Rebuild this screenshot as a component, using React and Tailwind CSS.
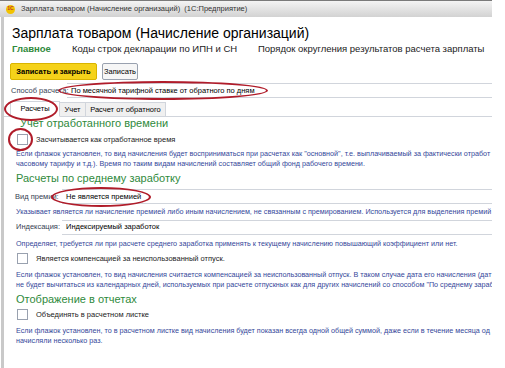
import React from 'react';

const font = { fontFamily: '"Liberation Sans", Arial, sans-serif' };

function Checkbox() {
    return <span className="inline-block h-[11px] w-[11px] border border-gray-400 bg-white" />;
}

function Note({ children }) {
    return (
        <div className="pl-[12px] text-[7.2px] leading-[9.5px] text-[#34489a] whitespace-nowrap">
            {children}
        </div>
    );
}

function Field({ label, value, labelWidth, labelPad = 'pl-[10px]' }) {
    return (
        <div className={`flex items-center h-[15px] ${labelPad}`}>
            <span className={`text-[7.5px] text-gray-700 whitespace-nowrap shrink-0 ${labelWidth}`}>{label}</span>
            <div className="flex-1 h-[15px] flex items-center border-t border-b border-gray-300 pl-[4px] text-[7.5px] text-black whitespace-nowrap">
                {value}
            </div>
        </div>
    );
}

function Ring({ className }) {
    return <span className={`absolute rounded-[50%] border-2 border-[#b01c2a] pointer-events-none ${className}`} />;
}

export default function App() {
    return (
        <div className="w-[505px] h-[368px] bg-white overflow-hidden relative" style={font}>
            <div className="w-[492px] h-[368px] overflow-hidden relative">
                {/* Title bar */}
                <div className="h-[17px] flex items-center gap-[6px] pl-[6px] border-t border-[#7a7a7a] bg-gradient-to-b from-[#f4f4f4] to-[#d2d2d2]">
                    <span className="h-[9px] w-[9px] rounded-full bg-[#f2c200] text-[5px] font-bold text-[#c0392b] flex items-center justify-center">1C</span>
                    <span className="text-[7.5px] text-[#333] whitespace-nowrap">Зарплата товаром (Начисление организаций)&nbsp; (1С:Предприятие)</span>
                </div>

                <div className="border-l-[3px] border-[#c9c9c9] h-[351px] ml-[1px]">
                    {/* Heading */}
                    <div className="h-[23px] flex items-end pl-[8px] text-[14px] text-black leading-none whitespace-nowrap">
                        Зарплата товаром (Начисление организаций)
                    </div>
                    {/* Section links */}
                    <div className="h-[18px] flex items-center pl-[8px] text-[9.5px] text-[#222] whitespace-nowrap">
                        <span className="text-[#2f8a3c] font-semibold w-[60px] shrink-0">Главное</span>
                        <span className="w-[186px] shrink-0">Коды строк декларации по ИПН и СН</span>
                        <span className="shrink-0">Порядок округления результатов расчета зарплаты</span>
                    </div>
                    {/* Buttons */}
                    <div className="h-[23px] flex items-center gap-[5px] pl-[6px] pt-[4px]">
                        <span className="h-[17px] w-[87px] flex items-center justify-center rounded-[2px] bg-[#f5d21a] border border-[#d9b400] text-[7.5px] font-bold text-black whitespace-nowrap">
                            Записать и закрыть
                        </span>
                        <span className="h-[17px] w-[36px] flex items-center justify-center rounded-[2px] bg-[#f6f6f6] border border-gray-400 text-[7.5px] text-black">
                            Записать
                        </span>
                    </div>
                    <div className="h-[2px]" />
                    <Field label="Способ расчета:" value="По месячной тарифной ставке от обратного по дням" labelWidth="w-[56px]" labelPad="pl-[7px]" />
                    {/* Tabs */}
                    <div className="h-[18px] flex items-end pl-[6px] mt-[1px] border-b border-gray-300">
                        <span className="h-[16px] w-[50px] flex items-center justify-center text-[7.5px] bg-white border border-gray-300 border-b-white -mb-px">Расчеты</span>
                        <span className="h-[14px] w-[26px] flex items-center justify-center text-[7.5px] bg-[#f0f0f0] border-t border-r border-gray-300">Учет</span>
                        <span className="h-[14px] w-[80px] flex items-center justify-center text-[7.5px] bg-[#f0f0f0] border-t border-r border-gray-300 whitespace-nowrap">Расчет от обратного</span>
                    </div>

                    <div className="h-[15px] flex items-center pb-[3px] pl-[16px] text-[11px] text-[#2f8a3c] whitespace-nowrap">Учет отработанного времени</div>
                    <div className="h-[15px] flex items-center gap-[8px] pl-[13px]">
                        <Checkbox />
                        <span className="text-[7.5px] text-[#222] whitespace-nowrap">Засчитывается как отработанное время</span>
                    </div>
                    <div className="h-[2px]" />
                    <Note>
                        Если флажок установлен, то вид начисления будет восприниматься при расчетах как "основной", т.е. выплачиваемый за фактически отработ<br />
                        часовому тарифу и т.д.). Время по таким видам начислений составляет общий фонд рабочего времени.
                    </Note>
                    <div className="h-[18px] flex items-end pl-[12px] text-[11px] text-[#2f8a3c] whitespace-nowrap">Расчеты по среднему заработку</div>
                    <div className="h-[3px]" />
                    <Field label="Вид премии:" value="Не является премией" labelWidth="w-[47px]" labelPad="pl-[11px]" />
                    <div className="h-[3px]" />
                    <Note>Указывает является ли начисление премией либо иным начислением, не связанным с премированием. Используется для выделения премий</Note>
                    <div className="h-[3px]" />
                    <Field label="Индексация:" value="Индексируемый заработок" labelWidth="w-[46px]" labelPad="pl-[12px]" />
                    <div className="h-[4px]" />
                    <Note>Определяет, требуется ли при расчете среднего заработка применять к текущему начислению повышающий коэффициент или нет.</Note>
                    <div className="h-[4px]" />
                    <div className="h-[13px] flex items-center gap-[8px] pl-[13px]">
                        <Checkbox />
                        <span className="text-[7.5px] text-[#222] whitespace-nowrap">Является компенсацией за неиспользованный отпуск.</span>
                    </div>
                    <div className="h-[5px]" />
                    <Note>
                        Если флажок установлен, то вид начисления считается компенсацией за неиспользованный отпуск. В таком случае дата его начисления (дат<br />
                        не будет вычитаться из календарных дней, используемых при расчете отпускных как для других начислений со способом "По среднему зарабо
                    </Note>
                    <div className="h-[18px] flex items-end pl-[12px] text-[11px] text-[#2f8a3c] whitespace-nowrap">Отображение в отчетах</div>
                    <div className="h-[1px]" />
                    <div className="h-[13px] flex items-center gap-[8px] pl-[13px]">
                        <Checkbox />
                        <span className="text-[7.5px] text-[#222] whitespace-nowrap">Объединять в расчетном листке</span>
                    </div>
                    <div className="h-[5px]" />
                    <Note>
                        Если флажок установлен, то в расчетном листке вид начисления будет показан всегда одной общей суммой, даже если в течение месяца од<br />
                        начисляли несколько раз.
                    </Note>
                </div>

                {/* Annotation rings */}
                <Ring className="left-[58px] top-[81px] w-[210px] h-[19px]" />
                <Ring className="left-[4px] top-[97px] w-[54px] h-[24px]" />
                <Ring className="left-[8px] top-[128px] w-[25px] h-[23px]" />
                <Ring className="left-[51px] top-[187px] w-[100px] h-[20px]" />
            </div>
        </div>
    );
}
